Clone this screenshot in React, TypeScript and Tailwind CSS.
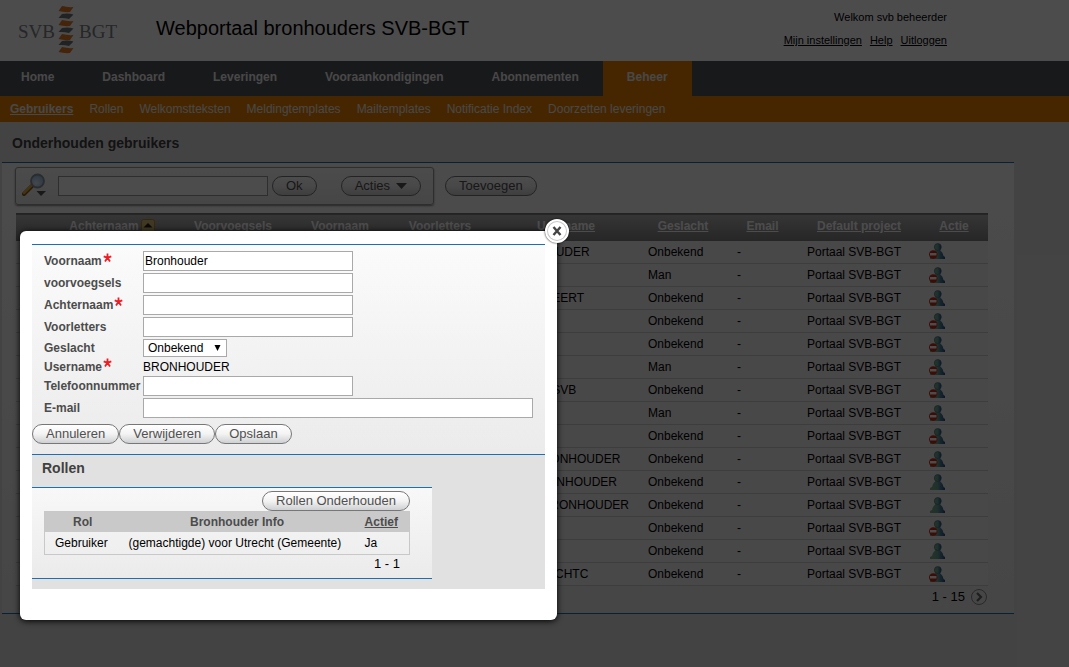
/**
 * SVB-BGT portal: user administration page with the edit dialog opened on top
 */
import { useState } from 'react';
import type { ReactNode } from 'react';
import clsx from 'clsx';

interface UserRow {
  username: string;
  gender: string;
  blocked: boolean;
}

const navItems = ['Home', 'Dashboard', 'Leveringen', 'Vooraankondigingen', 'Abonnementen', 'Beheer'];

const subItems = [
  'Gebruikers',
  'Rollen',
  'Welkomstteksten',
  'Meldingtemplates',
  'Mailtemplates',
  'Notificatie Index',
  'Doorzetten leveringen',
];

const columns = [
  { label: '', width: 'w-[35px]' },
  { label: 'Achternaam', width: 'w-[122px]' },
  { label: 'Voorvoegsels', width: 'w-[120px]' },
  { label: 'Voornaam', width: 'w-[94px]' },
  { label: 'Voorletters', width: 'w-[106px]' },
  { label: 'Username', width: 'w-[146px]' },
  { label: 'Geslacht', width: 'w-[88px]' },
  { label: 'Email', width: 'w-[71px]' },
  { label: 'Default project', width: 'w-[122px]' },
  { label: 'Actie', width: 'w-[68px]' },
];

const users: UserRow[] = [
  { username: 'BRONHOUDER', gender: 'Onbekend', blocked: true },
  { username: '', gender: 'Man', blocked: true },
  { username: 'BGTBEHEERT', gender: 'Onbekend', blocked: true },
  { username: '', gender: 'Onbekend', blocked: true },
  { username: '', gender: 'Onbekend', blocked: true },
  { username: '', gender: 'Man', blocked: true },
  { username: 'BGT_W_SVB', gender: 'Onbekend', blocked: true },
  { username: '', gender: 'Man', blocked: true },
  { username: '', gender: 'Onbekend', blocked: true },
  { username: 'TESTBRONHOUDER', gender: 'Onbekend', blocked: true },
  { username: 'GEMBRONHOUDER', gender: 'Onbekend', blocked: false },
  { username: 'UTRE_BRONHOUDER', gender: 'Onbekend', blocked: false },
  { username: '', gender: 'Onbekend', blocked: true },
  { username: '', gender: 'Onbekend', blocked: false },
  { username: 'GMUTRECHTC', gender: 'Onbekend', blocked: true },
];

function Logo() {
  const bands = [6, 13, 20, 27, 34, 40, 47];
  return (
    <svg width="104" height="52" viewBox="16 4 104 52" role="img" aria-label="SVB-BGT">
      <text x="18" y="38" fontSize="19" fill="#7d8287" fontFamily="'Liberation Serif', serif">SVB</text>
      <text x="79" y="38" fontSize="19" fill="#7d8287" fontFamily="'Liberation Serif', serif">BGT</text>
      {bands.map((y, i) => (
        <path
          key={y}
          d={i % 2 === 0
            ? `M62 ${y} Q68 ${y + 1.5} 73.5 ${y + 1} L70 ${y + 6} Q64 ${y + 6.5} 58.5 ${y + 5} Z`
            : `M62 ${y + 1} Q68 ${y} 73.5 ${y + 1.5} L69 ${y + 6} Q64 ${y + 4.5} 58.5 ${y + 5} Z`}
          fill={i % 2 === 0 ? '#e8792a' : '#6d7378'}
        />
      ))}
    </svg>
  );
}

function SearchIcon() {
  return (
    <svg width="26" height="26" viewBox="0 0 26 26" aria-hidden="true">
      <defs>
        <radialGradient id="lens" cx="40%" cy="65%" r="70%">
          <stop offset="0" stopColor="#e8f3ff" />
          <stop offset="1" stopColor="#8fb4de" />
        </radialGradient>
      </defs>
      <path d="M10 13 L2 21" stroke="#8a5c10" strokeWidth="4" strokeLinecap="round" />
      <path d="M9.500 12.500 L2 20" stroke="#dca84c" strokeWidth="2.500" strokeLinecap="round" />
      <circle cx="15.500" cy="8" r="6.500" fill="url(#lens)" stroke="#8d959e" strokeWidth="1.800" />
      <path d="M14.500 18 H24 L19 23 Z" fill="#555" />
    </svg>
  );
}

function UserIcon({ blocked }: { blocked: boolean }) {
  return (
    <svg width="17" height="17" viewBox="0 0 17 17" aria-hidden="true">
      <defs>
        <linearGradient id="person" x1="0" y1="0" x2="1" y2="0">
          <stop offset="0" stopColor="#7fae86" />
          <stop offset="0.5" stopColor="#6aa096" />
          <stop offset="1" stopColor="#234a8c" />
        </linearGradient>
      </defs>
      <path d="M1 16 V14 L3 13 L4 10 L6.500 7 H11 L13.500 10 L14.500 13 L16 14 V16 Z" fill="url(#person)" />
      <circle cx="8.800" cy="4" r="3.500" fill="url(#person)" stroke="#40647c" strokeWidth="0.600" />
      {blocked && (
        <>
          <circle cx="4.200" cy="11.500" r="4.200" fill="#d02818" />
          <path d="M1 10 H7.500 V12.500 H1 Z" fill="#fff" />
        </>
      )}
    </svg>
  );
}

function Required() {
  return (
    <svg className="mb-2 ml-px" width="9" height="9" viewBox="0 0 9 9" aria-hidden="true">
      <path
        d="M4.500 4.800 V0.500 M4.500 4.800 L0.700 3.400 M4.500 4.800 L8.300 3.400 M4.500 4.800 L2 8.400 M4.500 4.800 L7 8.400"
        stroke="#ee1c25"
        strokeWidth="1.800"
      />
    </svg>
  );
}

function PillButton({ children, className }: { children: ReactNode; className?: string }) {
  return (
    <button
      type="button"
      className={clsx(
        'flex h-5 items-center rounded-full border border-[#777] bg-linear-to-b from-white via-[#f3f3f3] to-[#cfd0d2] px-[13px] text-[13px] leading-4 whitespace-nowrap text-[#505050]',
        className,
      )}
    >
      {children}
    </button>
  );
}

function Field({ id, label, required, children }: { id?: string; label: string; required?: boolean; children: ReactNode }) {
  return (
    <>
      <label htmlFor={id} className="flex items-center font-bold whitespace-nowrap text-[#4c4c4c]">
        {label}
        {required && <Required />}
      </label>
      <div className="flex items-center">{children}</div>
    </>
  );
}

const inputStyle = 'h-5 border border-[#a9a9a9] bg-white px-px text-[12px] text-black';

function EditDialog() {
  const [gender, setGender] = useState('Onbekend');

  return (
    <div
      role="dialog"
      aria-label="Gebruiker wijzigen"
      className="absolute top-[231px] left-5 w-[537px] rounded-[6px] bg-white px-3 pt-[13px] pb-[31px] shadow-[0_1px_6px_#000]"
    >
      <button
        type="button"
        aria-label="Sluiten"
        className="absolute -top-3 -right-3 flex size-6 items-center justify-center rounded-full border-2 border-white bg-[#c8c8c8] p-px shadow-[0_0_2px_#000]"
      >
        <span className="flex size-full items-center justify-center rounded-full bg-white">
          <svg width="10" height="10" viewBox="0 0 10 10" aria-hidden="true">
            <path d="M1.500 1 L8.500 9 M8.500 1 L1.500 9" stroke="#444" strokeWidth="2.400" />
          </svg>
        </span>
      </button>

      <form className="border-t border-[#1c6fb3] bg-linear-to-b from-[#fbfbfb] to-[#ebebeb] pb-[10px]">
        <div className="grid grid-cols-[99px_1fr] grid-rows-[22px_22px_22px_22px_20px_17px_22px_22px] pt-[5px] pl-3 text-[12px] leading-4">
          <Field id="voornaam" label="Voornaam" required>
            <input id="voornaam" defaultValue="Bronhouder" className={clsx(inputStyle, 'w-[210px]')} />
          </Field>
          <Field id="voorvoegsels" label="voorvoegsels">
            <input id="voorvoegsels" className={clsx(inputStyle, 'w-[210px]')} />
          </Field>
          <Field id="achternaam" label="Achternaam" required>
            <input id="achternaam" className={clsx(inputStyle, 'w-[210px]')} />
          </Field>
          <Field id="voorletters" label="Voorletters">
            <input id="voorletters" className={clsx(inputStyle, 'w-[210px]')} />
          </Field>
          <Field id="geslacht" label="Geslacht">
            <div className="relative">
              <select
                id="geslacht"
                value={gender}
                onChange={e => setGender(e.target.value)}
                className="block h-[18px] w-[84px] appearance-none border border-[#a9a9a9] bg-white pl-1 text-[12px] leading-4 text-black"
              >
                <option>Onbekend</option>
                <option>Man</option>
                <option>Vrouw</option>
              </select>
              <svg className="pointer-events-none absolute top-1.5 right-1.5" width="7" height="6" viewBox="0 0 7 6" aria-hidden="true">
                <path d="M0.500 0 H6.500 L3.500 6 Z" fill="#000" />
              </svg>
            </div>
          </Field>
          <Field label="Username" required>
            <span className="text-black">BRONHOUDER</span>
          </Field>
          <Field id="telefoon" label="Telefoonnummer">
            <input id="telefoon" className={clsx(inputStyle, 'w-[210px]')} />
          </Field>
          <Field id="email" label="E-mail">
            <input id="email" className={clsx(inputStyle, 'w-[390px]')} />
          </Field>
        </div>
        <div className="mt-[5px] flex">
          <PillButton>Annuleren</PillButton>
          <PillButton>Verwijderen</PillButton>
          <PillButton>Opslaan</PillButton>
        </div>
      </form>

      <section className="border-t border-[#1c6fb3] bg-[#e1e1e1] pb-[10px]">
        <h2 className="h-8 pt-1 pl-[10px] text-[14px] leading-[18px] font-bold text-[#404040]">Rollen</h2>
        <div className="w-[400px] border-y border-[#1c6fb3] bg-linear-to-b from-[#f8f8f8] to-[#ebebeb] pt-[3px] pr-[22px] pl-3">
          <div className="flex justify-end">
            <PillButton>Rollen Onderhouden</PillButton>
          </div>
          <table className="w-full table-fixed border border-[#c8c8c8] text-[12px] leading-4">
            <thead>
              <tr className="h-5 bg-[#c9c9c9] text-[#4c4c4c]">
                <th className="w-[76px] font-bold">Rol</th>
                <th className="font-bold">Bronhouder Info</th>
                <th className="w-[56px] font-bold"><a href="#actief" className="underline">Actief</a></th>
              </tr>
            </thead>
            <tbody>
              <tr className="h-[23px] text-black">
                <td className="pl-[10px]">Gebruiker</td>
                <td className="pl-2 whitespace-nowrap">(gemachtigde) voor Utrecht (Gemeente)</td>
                <td className="pl-[11px]">Ja</td>
              </tr>
            </tbody>
          </table>
          <p className="pr-2.5 pb-[5px] text-right text-[13px] leading-[18px] text-black">1 - 1</p>
        </div>
      </section>
    </div>
  );
}

export default function App() {
  const [query, setQuery] = useState('');

  return (
    <div className="relative min-h-screen overflow-hidden bg-[#e2e2e2] font-['Liberation_Sans',Arial,sans-serif] text-[12px] leading-4 text-black">
      {/* Header */}
      <header className="h-[61px] bg-white">
        <div className="flex max-w-[947px] items-start pl-4">
          <div className="pt-1"><Logo /></div>
          <h1 className="pt-4 pl-9 text-[20px] leading-6">Webportaal bronhouders SVB-BGT</h1>
          <div className="ml-auto pt-[9px] text-right text-[11px]">
            <p>Welkom svb beheerder</p>
            <div className="mt-[7px] flex gap-2">
              <a href="#instellingen" className="underline">Mijn instellingen</a>
              <a href="#help" className="underline">Help</a>
              <a href="#uitloggen" className="underline">Uitloggen</a>
            </div>
          </div>
        </div>
      </header>

      {/* Navigation */}
      <nav className="flex h-[35px] bg-[#505459] font-bold text-[#f0f0f0]">
        {navItems.map(item => (
          <a
            key={item}
            href={`#${item}`}
            className={clsx('flex items-center px-6 pb-1 first:pl-[21px]', item === 'Beheer' && 'bg-[#eb8000]')}
          >
            {item}
          </a>
        ))}
      </nav>
      <nav className="flex h-[26px] items-center gap-4 bg-[#eb8000] pl-[10px] text-[#f0f0f0]">
        {subItems.map((item, i) => (
          <a key={item} href={`#${item}`} className={i === 0 ? 'font-bold underline' : ''}>{item}</a>
        ))}
      </nav>

      {/* User list */}
      <main className="max-w-[1014px] pl-0.5">
        <h2 className="flex h-10 items-center pt-0.5 pl-[10px] text-[14px] font-bold text-[#404040]">Onderhouden gebruikers</h2>
        <section className="border-y border-[#1c6fb3] bg-linear-to-b from-[#fcfcfc] to-[#ebebeb] pt-1 pb-2">
          <div className="flex items-center gap-[11px] pl-[13px]">
            <div className="flex h-[38px] w-[419px] items-center rounded-[3px] border border-[#999] bg-linear-to-b from-[#fcfcfc] to-[#ebebeb] pl-[6px] shadow-[0_1px_2px_#888]">
              <SearchIcon />
              <input
                type="text"
                aria-label="Zoeken"
                value={query}
                onChange={e => setQuery(e.target.value)}
                className="ml-[10px] h-5 w-[210px] border border-[#999] bg-white px-1"
              />
              <PillButton className="ml-1">Ok</PillButton>
              <PillButton className="ml-6 gap-1.5">
                Acties
                <svg width="11" height="6" viewBox="0 0 11 6" aria-hidden="true">
                  <path d="M0 0 H11 L5.500 6 Z" fill="#505050" />
                </svg>
              </PillButton>
            </div>
            <PillButton>Toevoegen</PillButton>
          </div>

          <div className="mt-2 pr-[26px] pl-[14px]">
            <table className="w-full table-fixed">
              <thead>
                <tr className="h-[27px] border-t border-[#777] bg-linear-to-b from-[#b4b4b4] to-[#808080] text-white">
                  {columns.map(col => (
                    <th key={col.label} className={clsx('pb-0.5 font-bold whitespace-nowrap', col.width)}>
                      <span className="flex items-center justify-center gap-0.5">
                        <a href={`#${col.label}`} className="underline">{col.label}</a>
                        {col.label === 'Achternaam' && (
                          <svg width="14" height="14" viewBox="0 0 14 14" aria-hidden="true">
                            <rect x="0.500" y="0.500" width="13" height="13" rx="2" fill="#d8bd74" stroke="#a88a40" />
                            <path d="M2.500 8.500 H11.500 L7 4 Z" fill="#222" />
                          </svg>
                        )}
                      </span>
                    </th>
                  ))}
                </tr>
              </thead>
              <tbody>
                {users.map((user, i) => (
                  <tr key={i} className="h-[23px] border-b border-[#ccc] bg-[#f0f0f0]">
                    <td colSpan={5} />
                    <td className="pl-[10px] whitespace-nowrap">{user.username}</td>
                    <td className="pl-[9px]">{user.gender}</td>
                    <td className="pl-[10px]">-</td>
                    <td className="pl-[9px] whitespace-nowrap">Portaal SVB-BGT</td>
                    <td className="pl-[9px]">
                      <button type="button" aria-label={user.blocked ? 'Blokkeren' : 'Activeren'} className="block">
                        <UserIcon blocked={user.blocked} />
                      </button>
                    </td>
                  </tr>
                ))}
              </tbody>
            </table>
            <div className="flex items-center justify-end gap-[6px] pt-[3px] text-[13px] leading-4">
              <span>1 - 15</span>
              <button type="button" aria-label="Volgende" className="mr-px flex size-4 items-center justify-center rounded-full border border-[#888]">
                <svg width="8" height="10" viewBox="0 0 8 10" aria-hidden="true">
                  <path d="M2 1 L6 5 L2 9" fill="none" stroke="#666" strokeWidth="2.200" />
                </svg>
              </button>
            </div>
          </div>
        </section>
      </main>

      {/* Dialog over the dimmed page */}
      <div className="absolute inset-0 bg-black/70" />
      <EditDialog />
    </div>
  );
}
